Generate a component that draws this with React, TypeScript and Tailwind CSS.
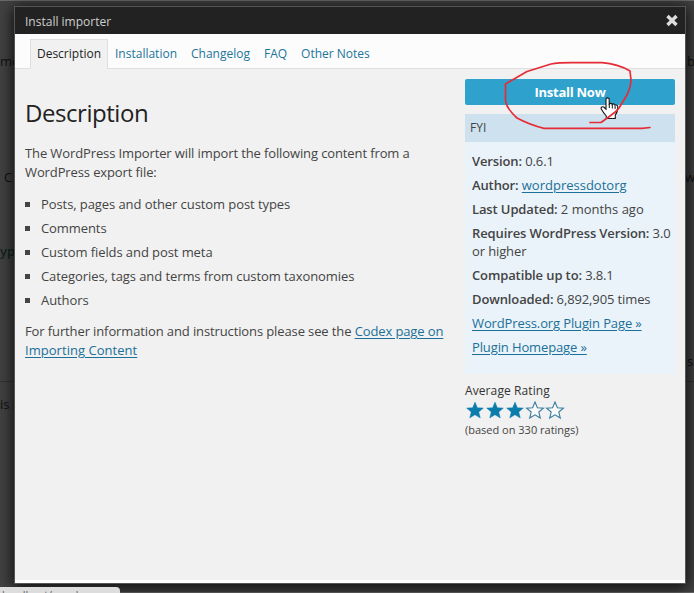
import type { ReactNode } from "react";

const tabs = ["Installation", "Changelog", "FAQ", "Other Notes"];
const features = [
  "Posts, pages and other custom post types",
  "Comments",
  "Custom fields and post meta",
  "Categories, tags and terms from custom taxonomies",
  "Authors",
];
const starPoints = "9,1 11.4,6.7 17.4,7.1 12.8,11 14.3,17 9,13.8 3.7,17 5.2,11 0.6,7.1 6.6,6.7";

function Link({ children }: { children: ReactNode }) {
  return <a className="text-[#1a7098] underline underline-offset-2">{children}</a>;
}

function Star({ filled }: { filled: boolean }) {
  return (
    <svg className="h-5 w-5" viewBox="-1 0 20 20">
      <polygon points={starPoints} fill={filled ? "#0c7cab" : "#fafafa"} stroke={filled ? "#0c7cab" : "#397d9f"} strokeWidth={filled ? 0.4 : 1.1} />
    </svg>
  );
}

function Fact({ label, children }: { label: string; children: ReactNode }) {
  return (
    <li>
      <strong className="font-semibold">{label}</strong> {children}
    </li>
  );
}

function PageBehind() {
  return (
    <div className="absolute inset-0 overflow-hidden border-t border-[#6b6b6b] bg-[#424242] text-[13px] leading-[18px] text-[#111]">
      <span className="absolute left-0 top-[51px]">mo</span>
      <span className="absolute left-[4px] top-[167px]">C</span>
      <span className="absolute left-0 top-[241px] font-semibold text-[#10251f]">yp</span>
      <span className="absolute left-0 top-[394px]">is i</span>
      <span className="absolute left-[687px] top-[51px]">b</span>
      <span className="absolute left-[685px] top-[167px]">w</span>
      <span className="absolute left-[687px] top-[351px]">s</span>
      <div className="absolute left-0 top-[380px] h-px w-full bg-[#333]" />
      <div className="absolute bottom-0 h-px w-full bg-[#666]" />
    </div>
  );
}

export default function App() {
  return (
    <div className="relative h-[593px] w-[694px] overflow-hidden pl-[15px] pt-[7px] font-['Open_Sans',sans-serif]">
      <PageBehind />
      <main className="relative flex h-[576px] w-[670px] flex-col bg-[#f1f1f1] text-[13px] text-[#444] shadow-[0_2px_14px_2px_rgba(0,0,0,0.85)] outline outline-1 outline-[#555]">
        <header className="flex h-[27px] shrink-0 items-center justify-between bg-[#222] pl-[10px] pr-[6px]">
          <h1 className="pt-[2px] text-[12px] text-[#cfcfcf]">Install importer</h1>
          <svg className="h-[14px] w-[14px]" viewBox="0 0 14 14">
            <path d="M2.500 2 11.500 11M11.500 2 2.500 11" stroke="#ddd" strokeWidth="3.400" />
          </svg>
        </header>
        <nav className="flex h-[35px] shrink-0 items-end border-b border-[#dfdfdf] bg-[#fcfcfc] pl-[15px] text-[12px] text-[#21759b]">
          <a className="-mb-px mr-[7px] flex h-[30px] w-[78px] items-center justify-center border border-b-0 border-[#dfdfdf] bg-[#f1f1f1] pb-px text-[#222]">Description</a>
          <div className="flex h-[28px] items-center gap-[14px]">
            {tabs.map((tab) => <a key={tab}>{tab}</a>)}
          </div>
        </nav>
        <div className="flex h-[508px] shrink-0 justify-between pl-[10px] pr-[10px]">
          <article className="w-[425px] pt-[25px] leading-[19px] tracking-[-0.115px]">
            <h2 className="text-[24px] leading-[37px] tracking-[-0.45px] text-[#222]">Description</h2>
            <p className="mt-[13px]">The WordPress Importer will import the following content from a WordPress export file:</p>
            <ul className="mt-[13px] flex flex-col gap-[5px] tracking-[-0.08px]">
              {features.map((feature) => (
                <li key={feature} className="flex items-center">
                  <span className="mr-[11px] h-[5px] w-[5px] bg-[#444]" />
                  {feature}
                </li>
              ))}
            </ul>
            <p className="mt-[12px]">
              For further information and instructions please see the <Link>Codex page on<br /><span className="tracking-[0.04px]">Importing Content</span></Link>
            </p>
          </article>
          <aside className="w-[210px] pt-[10px]">
            <button className="block h-[26px] w-full rounded-[2px] bg-[#2ea2cc] font-bold leading-[26px] tracking-[-0.25px] text-white">Install Now</button>
            <h2 className="mt-[9px] h-[28px] bg-[#cee1ef] pl-[5px] text-[12px] leading-[28px]">FYI</h2>
            <ul className="flex h-[232px] flex-col gap-[6px] bg-[#eaf3fa] pl-[7px] pt-[10px] leading-[18px] tracking-[-0.12px]">
              <Fact label="Version:">0.6.1</Fact>
              <Fact label="Author:"><span className="tracking-normal"><Link>wordpressdotorg</Link></span></Fact>
              <Fact label="Last Updated:"><span className="tracking-normal">2 months ago</span></Fact>
              <Fact label="Requires WordPress Version:">3.0 or higher</Fact>
              <Fact label="Compatible up to:">3.8.1</Fact>
              <Fact label="Downloaded:">6,892,905 times</Fact>
              <li><Link>WordPress.org Plugin Page »</Link></li>
              <li><Link>Plugin Homepage »</Link></li>
            </ul>
            <h3 className="mt-[8px] text-[12px] leading-[18px] tracking-[0.1px] text-[#333]">Average Rating</h3>
            <div className="mt-px flex">
              {[1, 2, 3, 4, 5].map((n) => <Star key={n} filled={n <= 3} />)}
            </div>
            <small className="block text-[11px] leading-[18px]">(based on 330 ratings)</small>
          </aside>
        </div>
        <footer className="mt-auto h-[3px] bg-white" />
      </main>
      <div className="absolute bottom-0 left-0 h-[6px] w-[120px] overflow-hidden rounded-tr-[4px] bg-[#ddd] pl-[2px] text-[11px] leading-[16px] text-[#666]">
        localhost/wordpress
      </div>
      <svg className="pointer-events-none absolute left-0 top-0 h-[593px] w-[694px]" viewBox="0 0 694 593" fill="none">
        <path d="M606 99c0-1.500 3-1.500 3.200 0V104c1-1 2.600-.8 3 .5 1-1 2.500-.7 2.800.7 1-.5 2.800.1 2.800 1.500 0 4-.8 6.300-2.500 8.300v3.500h-9v-2.500c-1.800-2-3.700-4.500-5-7-1-2 1.500-3 3-1.500l1.700 1.700Z" fill="#fff" stroke="#161616" strokeWidth="1.100" />
        <path d="M609.300 104v4M612.300 105v3.500M615.100 106v3" stroke="#161616" />
        <path d="M590 122.500H601L610 116Q616 112 619 108L627 95Q631 86 631 80L630 71Q618 64 602 62.700H572Q558 62.700 551 64L527 71.500L505.500 84V101Q507 109 517 118Q530 125 544 128.300H642L650 127.500" stroke="#e62c36" strokeWidth="1.700" strokeLinecap="round" strokeLinejoin="round" />
      </svg>
    </div>
  );
}
